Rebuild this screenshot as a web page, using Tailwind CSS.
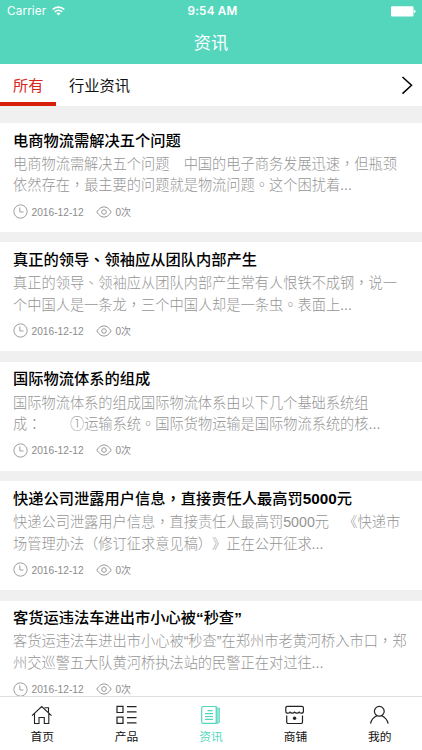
<!DOCTYPE html>
<html lang="zh-CN">
<head>
<meta charset="utf-8">
<title>资讯</title>
<script src="https://cdn.jsdelivr.net/npm/@tailwindcss/browser@4"></script>
</head>
<body class="font-['Liberation_Sans','Noto_Sans_CJK_SC',sans-serif] [text-spacing-trim:space-all]">
<svg class="hidden">
  <symbol id="clock" viewBox="0 0 16 16"><circle cx="8" cy="8" r="7.1"/><path d="M7.3 3.6V8.5H11.2"/></symbol>
  <symbol id="eye" viewBox="0 0 16 12"><path d="M.8 6C3 2.6 5.300 .9 8 .9S13 2.600 15.200 6C13 9.400 10.700 11.100 8 11.100S3 9.400 .8 6Z"/><circle cx="8" cy="6" r="2.300"/></symbol>
</svg>
<div class="w-[422px] h-[750px] flex flex-col overflow-hidden bg-[#f0f0f0]">
  <header class="h-16 shrink-0 bg-[#54d6bd] text-white">
    <div class="h-[22px] pt-px grid grid-cols-3 items-center pl-[7px] pr-[6px] font-['Inter',sans-serif] text-[11.7px]">
      <div class="flex items-center gap-[6px]"><span class="tracking-[0.15px]">Carrier</span>
        <svg class="w-[13px] h-[10px] -mt-px" viewBox="0 0 13 10" fill="none" stroke="white" stroke-width="1.7"><path d="M.7 3.500A8.300 8.300 0 0 1 12.300 3.500M2.800 5.800A5.200 5.200 0 0 1 10.200 5.800"/><path d="M6.500 9.600 4.500 7.600A2.800 2.800 0 0 1 8.500 7.600Z" fill="white" stroke="none"/></svg>
      </div>
      <div class="text-center font-semibold tracking-[0.2px] pl-[2px] whitespace-nowrap">9:54 AM</div>
      <svg class="w-[25px] h-[11px] justify-self-end -mt-px" viewBox="0 0 25 11" fill="white"><rect x="0" y=".3" width="22.500" height="10.200" rx="1.200"/><path d="M23 3.700Q24.600 4 24.600 5.400T23 7.100Z"/></svg>
    </div>
    <h1 class="h-[42px] text-center text-[17.2px] leading-[42px]">资讯</h1>
  </header>
  <nav class="h-[42px] shrink-0 bg-white flex justify-between text-[15.25px] leading-[43px]">
    <div class="flex">
      <div class="w-14 h-[42px] border-b-4 border-[#d91e0c] pl-[13px] text-[#d9261c]">所有</div>
      <div class="pl-[13px] text-[#111]">行业资讯</div>
    </div>
    <svg class="w-[13px] h-5 mt-[11px] mr-[8px]" viewBox="0 0 13 20" fill="none" stroke="#000" stroke-width="1.500"><path d="M1.500 2 10.500 10.300 1.500 18.600"/></svg>
  </nav>
  <main class="flex-1 min-h-0 overflow-hidden pt-[17px] flex flex-col gap-[10.4px] text-[#959595] whitespace-nowrap">
    <article class="h-[109px] shrink-0 bg-white px-[13px] pt-[7.600px]">
      <h2 class="h-5 text-[15.25px] leading-5 font-medium text-black">电商物流需解决五个问题</h2>
      <p class="mt-[3.300px] text-[14.22px] leading-[21.600px] font-light">电商物流需解决五个问题　中国的电子商务发展迅速<span lang="zh-TW" class="leading-none font-['Noto_Sans_CJK_TC',sans-serif]">，</span>但瓶颈<br>依然存在<span lang="zh-TW" class="leading-none font-['Noto_Sans_CJK_TC',sans-serif]">，</span>最主要的问题就是物流问题<span lang="zh-TW" class="leading-none font-['Noto_Sans_CJK_TC',sans-serif]">。</span>这个困扰着...</p>
      <div class="mt-[7px] h-4 flex items-center text-[10px] leading-[17px] text-[#8c8c8c]"><svg class="w-[15px] h-[15px] mr-[3.500px] -mt-px fill-none stroke-[#999]"><use href="#clock"/></svg><span class="w-[64px] text-[10.200px]">2016-12-12</span><svg class="w-4 h-3 mr-1 -mt-px fill-none stroke-[#999]"><use href="#eye"/></svg><span>0次</span></div>
    </article>
    <article class="h-[109px] shrink-0 bg-white px-[13px] pt-[7.600px]">
      <h2 class="h-5 text-[15.25px] leading-5 font-medium text-black">真正的领导<span lang="zh-TW" class="leading-none font-['Noto_Sans_CJK_TC',sans-serif]">、</span>领袖应从团队内部产生</h2>
      <p class="mt-[3.300px] text-[14.22px] leading-[21.600px] font-light">真正的领导<span lang="zh-TW" class="leading-none font-['Noto_Sans_CJK_TC',sans-serif]">、</span>领袖应从团队内部产生常有人恨铁不成钢<span lang="zh-TW" class="leading-none font-['Noto_Sans_CJK_TC',sans-serif]">，</span>说一<br>个中国人是一条龙<span lang="zh-TW" class="leading-none font-['Noto_Sans_CJK_TC',sans-serif]">，</span>三个中国人却是一条虫<span lang="zh-TW" class="leading-none font-['Noto_Sans_CJK_TC',sans-serif]">。</span>表面上...</p>
      <div class="mt-[7px] h-4 flex items-center text-[10px] leading-[17px] text-[#8c8c8c]"><svg class="w-[15px] h-[15px] mr-[3.500px] -mt-px fill-none stroke-[#999]"><use href="#clock"/></svg><span class="w-[64px] text-[10.200px]">2016-12-12</span><svg class="w-4 h-3 mr-1 -mt-px fill-none stroke-[#999]"><use href="#eye"/></svg><span>0次</span></div>
    </article>
    <article class="h-[109px] shrink-0 bg-white px-[13px] pt-[7.600px]">
      <h2 class="h-5 text-[15.25px] leading-5 font-medium text-black">国际物流体系的组成</h2>
      <p class="mt-[3.300px] text-[14.22px] leading-[21.600px] font-light">国际物流体系的组成国际物流体系由以下几个基础系统组<br>成<span lang="zh-TW" class="leading-none font-['Noto_Sans_CJK_TC',sans-serif]">：</span>　　①运输系统<span lang="zh-TW" class="leading-none font-['Noto_Sans_CJK_TC',sans-serif]">。</span>国际货物运输是国际物流系统的核...</p>
      <div class="mt-[7px] h-4 flex items-center text-[10px] leading-[17px] text-[#8c8c8c]"><svg class="w-[15px] h-[15px] mr-[3.500px] -mt-px fill-none stroke-[#999]"><use href="#clock"/></svg><span class="w-[64px] text-[10.200px]">2016-12-12</span><svg class="w-4 h-3 mr-1 -mt-px fill-none stroke-[#999]"><use href="#eye"/></svg><span>0次</span></div>
    </article>
    <article class="h-[109px] shrink-0 bg-white px-[13px] pt-[7.600px]">
      <h2 class="h-5 text-[15.25px] leading-5 font-medium text-black">快递公司泄露用户信息<span lang="zh-TW" class="leading-none font-['Noto_Sans_CJK_TC',sans-serif]">，</span>直接责任人最高罚<span class="font-bold">5000</span>元</h2>
      <p class="mt-[3.300px] text-[14.22px] leading-[21.600px] font-light">快递公司泄露用户信息<span lang="zh-TW" class="leading-none font-['Noto_Sans_CJK_TC',sans-serif]">，</span>直接责任人最高罚5000元　《快递市<br>场管理办法（修订征求意见稿）》正在公开征求...</p>
      <div class="mt-[7px] h-4 flex items-center text-[10px] leading-[17px] text-[#8c8c8c]"><svg class="w-[15px] h-[15px] mr-[3.500px] -mt-px fill-none stroke-[#999]"><use href="#clock"/></svg><span class="w-[64px] text-[10.200px]">2016-12-12</span><svg class="w-4 h-3 mr-1 -mt-px fill-none stroke-[#999]"><use href="#eye"/></svg><span>0次</span></div>
    </article>
    <article class="h-[109px] shrink-0 bg-white px-[13px] pt-[7.600px]">
      <h2 class="h-5 text-[15.25px] leading-5 font-medium text-black">客货运违法车进出市小心被<span class="font-bold">“</span>秒查<span class="font-bold">”</span></h2>
      <p class="mt-[3.300px] text-[14.22px] leading-[21.600px] font-light">客货运违法车进出市小心被“秒查”在郑州市老黄河桥入市口<span lang="zh-TW" class="leading-none font-['Noto_Sans_CJK_TC',sans-serif]">，</span>郑<br>州交巡警五大队黄河桥执法站的民警正在对过往...</p>
      <div class="mt-[7px] h-4 flex items-center text-[10px] leading-[17px] text-[#8c8c8c]"><svg class="w-[15px] h-[15px] mr-[3.500px] -mt-px fill-none stroke-[#999]"><use href="#clock"/></svg><span class="w-[64px] text-[10.200px]">2016-12-12</span><svg class="w-4 h-3 mr-1 -mt-px fill-none stroke-[#999]"><use href="#eye"/></svg><span>0次</span></div>
    </article>
  </main>
  <footer class="h-[54px] shrink-0 bg-white border-t border-[#dedede] grid grid-cols-5 justify-items-center text-[11.75px] leading-4 text-[#111]">
    <div class="flex flex-col items-center pt-[7px] gap-[5px]">
      <svg class="w-[22px] h-5" viewBox="0 0 22 20" fill="none" stroke="#222" stroke-width="1.100"><path d="M1 11.700 10.700 2.600 20.500 11.700M13.500 3.800H17.500V8.500M3.500 9.800V19.500H8V13.500H13.300V19.500H17.800V9.800"/></svg><span>首页</span></div>
    <div class="flex flex-col items-center pt-[7px] gap-[5px]">
      <svg class="w-[22px] h-5" viewBox="0 0 22 20" fill="none" stroke="#222" stroke-width="1.200"><path d="M1 2.300H7V8.500H1ZM1 13.200H7V19.400H1ZM11 2.700H20.500M11 7.900H20.500M11 13.700H20.500M11 18.900H20.500"/></svg><span>产品</span></div>
    <div class="flex flex-col items-center pt-[7px] gap-[5px] text-[#54d6bd]">
      <svg class="w-[20px] h-5" viewBox="0 0 20 20" fill="none" stroke="#54d6bd" stroke-width="1.200"><path d="M2 2.500H15.200V19.300H2Q.7 19.300 .7 18V3.800Q.7 2.500 2 2.500Z"/><path d="M15.700 4H18.500V18Q18.500 19.300 17.200 19.300H15.700Z" fill="#54d6bd" fill-opacity=".6" stroke-width=".7"/><path d="M6.500 6.700H11.500M4 9.700H12M4 12.500H12M4 15.300H12"/></svg><span>资讯</span></div>
    <div class="flex flex-col items-center pt-[7px] gap-[5px]">
      <svg class="w-5 h-5" viewBox="0 0 20 20" fill="none" stroke="#222" stroke-width="1.200"><path d="M.8 7.500V4Q.8 2.300 2.500 2.300H16.700Q18.400 2.300 18.400 4V7.500Q18.400 9.200 16.300 9.200Q14.800 9.200 14.200 8.200Q13.500 9.200 12 9.200T9.600 8.200Q8.900 9.200 7.300 9.200T5 8.200Q4.400 9.200 2.900 9.200Q.8 9.200 .8 7.500ZM1.700 11.500V18Q1.700 19.500 3.200 19.500H16Q17.500 19.500 17.500 18V11.500"/><circle cx="9.600" cy="14.200" r="1.700" fill="#222" stroke="none"/></svg><span>商铺</span></div>
    <div class="flex flex-col items-center pt-[7px] gap-[5px]">
      <svg class="w-5 h-5" viewBox="0 0 20 20" fill="none" stroke="#222" stroke-width="1.200"><circle cx="9.300" cy="7.300" r="4.900"/><path d="M.5 19.700C1.200 15.800 3.700 13.200 6.800 11.700M11.800 11.700C14.900 13.200 17.400 15.800 18.200 19.700"/></svg><span>我的</span></div>
  </footer>
</div>
</body>
</html>
